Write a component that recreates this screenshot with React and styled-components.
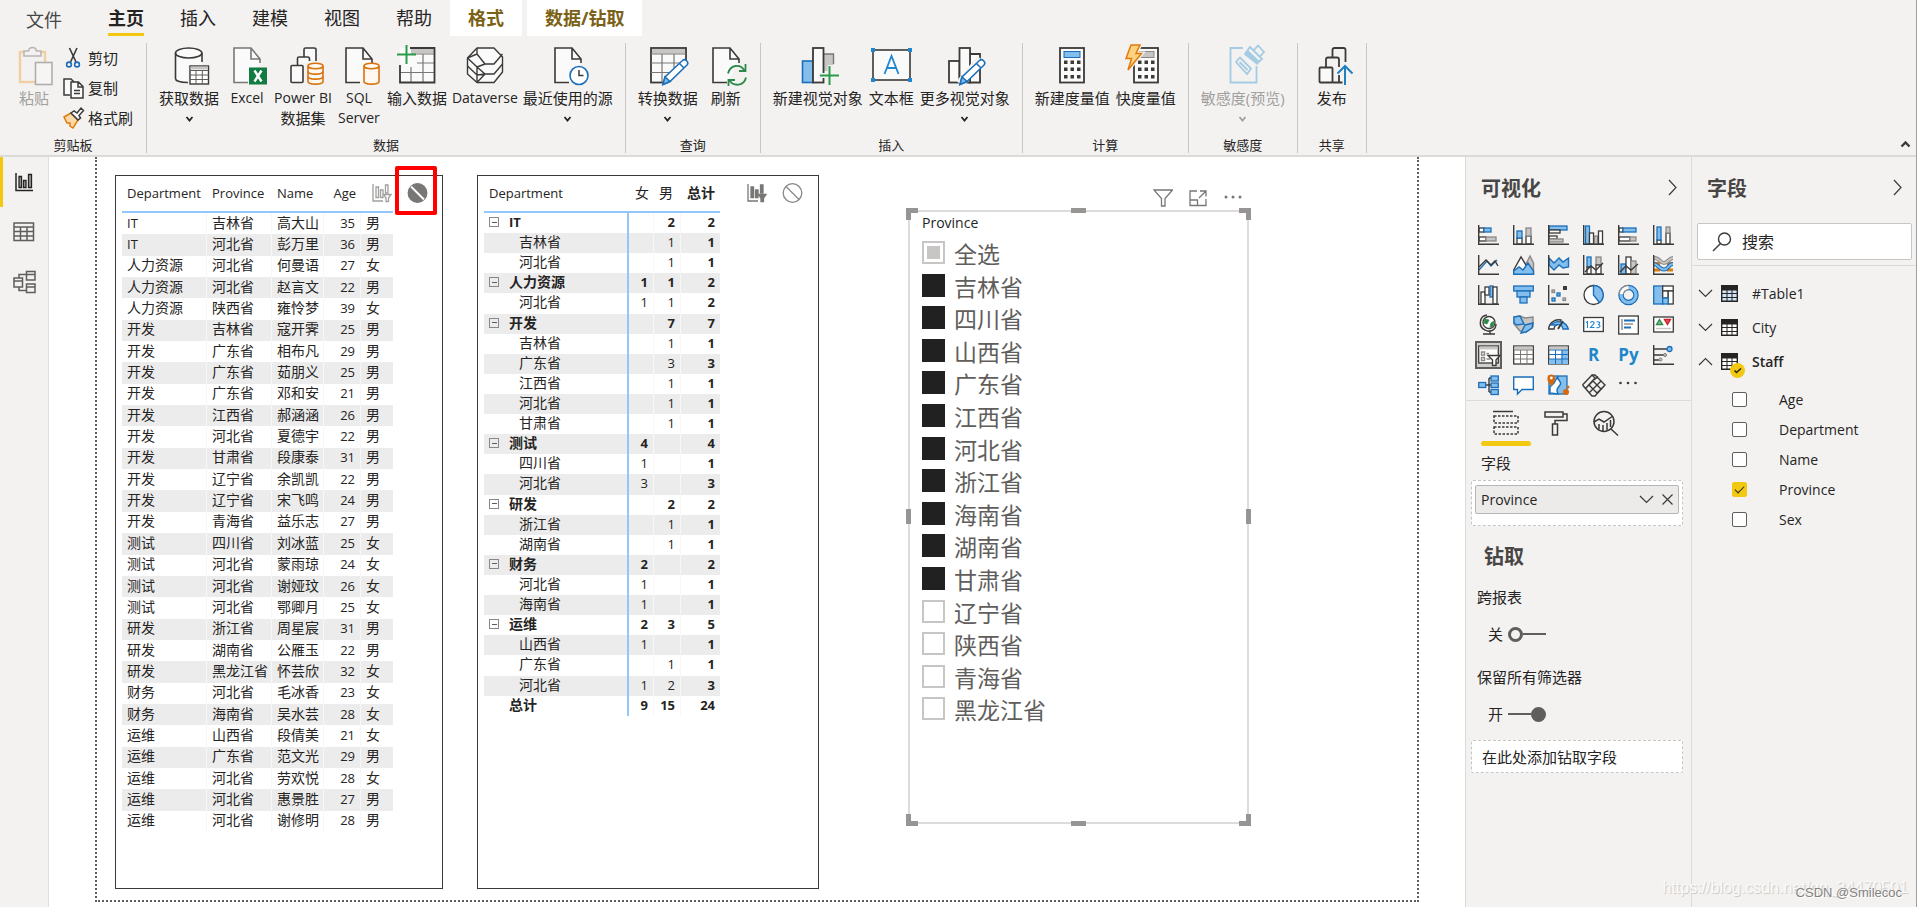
import React from 'react'
import styled, { createGlobalStyle, css } from 'styled-components'

const GlobalStyle = createGlobalStyle`
*{ box-sizing:border-box; }
body{
  margin:0;
  background:#fff;
  color:#252423;
  font-family:"Open Sans","Noto Sans CJK SC",sans-serif;
  font-size:15px;
}
button,input{
  font:inherit;
  color:inherit;
  margin:0;
}
button{
  padding:0;
  border:0;
  background:none;
  cursor:pointer;
}
`

const isLatin = (text) => /^[\x20-\x7e]+$/.test(String(text))

/* ---------- page shell ---------- */

const Shell = styled.div`
position:relative;
display:flex;
flex-direction:column;
min-height:100vh;
border-right:1px solid #a19f9d;
`
const Workspace = styled.div`
flex:1;
display:flex;
align-items:stretch;
`

/* ---------- ribbon ---------- */

const Ribbon = styled.header`
background:#f3f2f1;
border-bottom:2px solid #dcdad9;
`
const TabBar = styled.nav`
display:flex;
align-items:flex-start;
height:36px;
padding-left:8px;
`
const Tab = styled.button`
height:36px;
padding:0 18px;
font-size:18px;
line-height:36px;
margin-right:${(p) => (p.$contextual ? '5px' : '0')};
${(p) => p.$file && css`
  margin-right:10px;
  line-height:40px;
  color:#484644;
`}
${(p) => p.$contextual && css`
  background:#fff;
  color:#7b6115;
  font-weight:700;
`}
${(p) => p.$active && css`
  font-weight:700;
`}
`
const TabText = styled.span`
display:block;
height:36px;
border-bottom:3px solid ${(p) => (p.$active ? '#f2c811' : 'transparent')};
`
const Groups = styled.div`
display:flex;
align-items:stretch;
height:119px;
padding:7px 0 2px;
`
const Group = styled.section`
display:flex;
flex-direction:column;
justify-content:space-between;
padding:0 9px;
border-right:1px solid #c8c6c4;
`
const GroupItems = styled.div`
display:flex;
align-items:flex-start;
`
const GroupName = styled.div`
font-size:13px;
line-height:16px;
text-align:center;
`
const BigButton = styled.button`
display:flex;
flex-direction:column;
align-items:center;
min-width:50px;
padding:2px ${(p) => (p.$latin ? '2px' : '3px')} 0;
color:${(p) => (p.disabled ? '#a19f9d' : '#252423')};
`
const ButtonLine = styled.span`
font-size:${(p) => (p.$latin ? '14px' : '15px')};
line-height:20px;
white-space:nowrap;
`
const BigIcon = styled.svg`
display:block;
width:40px;
height:40px;
margin-bottom:3px;
overflow:visible;
`
const Caret = styled.svg`
display:block;
width:9px;
height:6px;
margin-top:8px;
`
const ClipStack = styled.div`
display:flex;
flex-direction:column;
padding:0 4px;
`
const SmallButton = styled.button`
display:flex;
align-items:center;
gap:4px;
height:30px;
font-size:15px;
line-height:20px;
`
const SmallIcon = styled.svg`
width:21px;
height:24px;
overflow:visible;
`
const CollapseRibbon = styled.button`
align-self:flex-end;
margin:0 5px 5px auto;
line-height:0;
`

const INK = '#3b3a39'
const BLUE = '#1b6fb8'
const SKY = '#83beec'
const ASH = '#c8c6c4'

const Doc = ({ stroke = INK }) => (
  <path d="M33 18V14L24 3H7V37.500H21M24 3V14H33" fill="#fafafa" stroke={stroke} strokeWidth="1.600" />
)
const Cylinder = ({ bands }) => (
  <g fill="#fff8f0" stroke="#d9730d" strokeWidth="1.600">
    <path d="M25 21V36.500C25 40 40 40 40 36.500V21" />
    <ellipse cx="32.500" cy="21" rx="7.500" ry="2.800" />
    {bands && <path fill="none" d="M25 26.500C25 30 40 30 40 26.500M25 31.500C25 35 40 35 40 31.500" />}
  </g>
)
const Pencil = () => (
  <g strokeWidth="1.500" stroke={BLUE}>
    <path d="M15 39.500L17 32L34.500 15.500C37 13 41.500 17 39 20L22 36.500Z" fill="#fff" />
    <path d="M15 39.500L17 32L22 36.500Z" fill={SKY} />
    <path d="M31.500 18.500L36 23" fill="none" />
  </g>
)
const Plus = ({ x, y }) => (
  <path d={`M${x - 9.5} ${y}H${x + 9.5}M${x} ${y - 9.5}V${y + 9.5}`} stroke="#2b9a4b" strokeWidth="2" />
)
const Keypad = ({ blue }) => (
  <g>
    <rect x="8" y="3" width="24" height="34.500" fill="#fafafa" stroke={INK} strokeWidth="1.800" />
    <rect x="12" y="6.500" width="16" height="6" fill={blue ? SKY : ASH} stroke={blue ? BLUE : '#8a8886'} />
    {[15.500, 22.500, 30].map((y) => [12, 18.500, 25].map((x) => (
      <rect key={`${x}-${y}`} x={x} y={y} width="3.500" height="3.500" fill={INK} />
    )))}
  </g>
)

const ribbonIcons = {
  getData: (
    <>
      <path d="M6.500 8V33.500C6.500 36 12 38 19 38V38L19 20H33V8" fill="#fafafa" />
      <path d="M33 17V8M6.500 8V33.500C6.500 36 12 37.500 19 37.500" fill="none" stroke={INK} strokeWidth="1.600" />
      <ellipse cx="19.700" cy="8" rx="13.200" ry="5" fill="#fafafa" stroke={INK} strokeWidth="1.600" />
      <rect x="21" y="21" width="18.500" height="18" fill="#fff" stroke={INK} strokeWidth="1.400" />
      <path d="M21.500 23H39" stroke={ASH} strokeWidth="3" />
      <path d="M21 25.500H39.500M21 30H39.500M21 34.500H39.500M27 25.500V39M33.300 25.500V39" stroke="#605e5c" />
    </>
  ),
  excel: (
    <>
      <Doc stroke="#797775" />
      <rect x="22" y="22.500" width="18" height="17" fill="#107c41" />
      <path d="M27.500 25.500L34.500 36.500M34.500 25.500L27.500 36.500" stroke="#fff" strokeWidth="2.400" />
    </>
  ),
  powerBi: (
    <>
      <g fill="#fafafa" stroke={INK} strokeWidth="1.600">
        <path d="M21 12V4.500Q21 3 22.500 3H31Q33 3 33 4.500V16" />
        <path d="M14.500 20V13.500Q14.500 12 16 12H24.500Q26.500 12 26.500 14V16" />
        <rect x="8" y="20.500" width="12" height="17" rx="1" />
      </g>
      <Cylinder bands />
    </>
  ),
  sql: (
    <>
      <Doc />
      <Cylinder />
    </>
  ),
  enterData: (
    <>
      <rect x="3" y="3" width="34.500" height="34.500" fill="#fafafa" />
      <path d="M14 5.700H37" stroke={ASH} strokeWidth="5" />
      <path d="M14 9H37M20 18H37M3 27.500H37M14 22V37M26 9V37" stroke="#797775" strokeWidth="1.200" />
      <path d="M13 3H37.500V37.500H3V20" fill="none" stroke={INK} strokeWidth="1.800" />
      <Plus x={9.5} y={9.5} />
    </>
  ),
  dataverse: (
    <g fill="#fafafa" stroke={INK} strokeWidth="1.400" strokeLinejoin="round">
      <path d="M12 3H29L37.500 12V27L29 37.500H12L2.500 29V13Z" />
      <path fill="none" d="M12 3V9L20 19H29L37.500 9M2.500 13L12 9M2.500 13L12 22L20 29L12 37.500M2.500 21L12 30M12 22V37.500M12 22L20 19M20 29H29L37.500 19M12 30L20 29" />
    </g>
  ),
  recent: (
    <>
      <Doc />
      <circle cx="31" cy="30.500" r="9" fill="#fff" stroke={BLUE} strokeWidth="1.600" />
      <path d="M31 25V30.500H35.500" fill="none" stroke={INK} strokeWidth="1.500" />
    </>
  ),
  transform: (
    <>
      <rect x="3" y="3" width="35" height="34.500" fill="#fafafa" stroke={INK} strokeWidth="1.800" />
      <rect x="4" y="4" width="33" height="4.500" fill={ASH} />
      <path d="M3 9H38M3 18H38M3 27.500H38M14 9V37M26 9V37" stroke="#797775" strokeWidth="1.200" />
      <path d="M21 39L40 21V40Z" fill="#f3f2f1" stroke="#f3f2f1" strokeWidth="3" />
      <Pencil />
    </>
  ),
  refresh: (
    <>
      <Doc />
      <path d="M22 28.500C24 20 34 18 38.500 25.500M39.500 19V26H33M40 32.500C38 41 28 42 23.500 35.500M22.500 41V35H29" fill="none" stroke="#2b8a47" strokeWidth="1.800" />
    </>
  ),
  newVisual: (
    <>
      <rect x="4.500" y="16" width="10.500" height="21.500" fill={SKY} stroke={BLUE} strokeWidth="1.600" />
      <path d="M25.500 9H35.500V20H30V26H25.500Z" fill={ASH} />
      <path d="M25.500 9H35.500V19" fill="none" stroke="#797775" strokeWidth="1.400" />
      <rect x="15" y="3" width="10.500" height="34.500" fill="#fafafa" stroke={INK} strokeWidth="1.800" />
      <path d="M20 30.500H40M32 21V40" stroke="#f3f2f1" strokeWidth="5" />
      <Plus x={31.5} y={30.5} />
    </>
  ),
  textBox: (
    <>
      <rect x="2" y="5" width="37" height="30" fill="#fafafa" stroke={INK} strokeWidth="1.600" />
      {[[0, 3], [37, 3], [0, 33], [37, 33]].map(([x, y]) => (
        <rect key={`${x}${y}`} x={x} y={y} width="4" height="4" fill="#1f86d0" />
      ))}
      <path d="M13.500 29L20.500 11L27.500 29M16 23H25" fill="none" stroke="#1f86d0" strokeWidth="1.800" />
    </>
  ),
  moreVisuals: (
    <>
      <g fill="#fafafa" stroke={INK} strokeWidth="1.800">
        <rect x="4" y="16" width="10.500" height="21.500" />
        <path d="M24.500 9H35V37.500H24.500Z" />
        <rect x="14.500" y="3" width="10.500" height="34.500" />
      </g>
      <path d="M15 39L36 14" stroke="#f3f2f1" strokeWidth="9" />
      <Pencil />
    </>
  ),
  measure: <Keypad blue />,
  quickMeasure: (
    <>
      <Keypad />
      <path d="M5 0H14L10 8.500H15.500L2 25L5.500 13.500H0Z" fill="#fcd27f" stroke="#f3f2f1" strokeWidth="4" />
      <path d="M5 0H14L10 8.500H15.500L2 25L5.500 13.500H0Z" fill="#fcd27f" stroke="#e07b0e" strokeWidth="1.500" />
    </>
  ),
  sensitivity: (
    <g fill="none" stroke="#a3cbe3" strokeWidth="1.800">
      <path d="M20 3H7.500V37.500H33.500V21" />
      <path d="M13 17L17 12.500L28 23.500L24 29Z M16.500 17L24.500 25" />
      <path d="M22 9L27 2L39 14L34 18.500Z" />
      <path d="M24 7L35.500 18" strokeWidth="4" />
      <path d="M31 5L35 0.500L41 7L37 11.500" />
    </g>
  ),
  publish: (
    <>
      <g fill="#fafafa" stroke={INK} strokeWidth="1.800">
        <path d="M20.500 12V5Q20.500 3 22.500 3H31.500Q33.500 3 33.500 5V17" fill="none" />
        <path d="M14 22V14.500Q14 12.500 16 12.500H25Q27 12.500 27 14.500V22" fill="none" />
        <rect x="7.500" y="22.500" width="13" height="15" rx="1" />
        <path d="M20.500 37.500H30.500M27 30V37.500" fill="none" />
      </g>
      <path d="M33 40V21M25.500 28.500L33 21L40.500 28.500" fill="none" stroke="#1f7fbf" strokeWidth="2" />
    </>
  ),
  paste: (
    <>
      <rect x="6" y="7" width="25" height="30" fill="none" stroke="#f0cfa0" strokeWidth="2.400" />
      <path d="M10 11V6H14.500Q15 2.500 18.500 2.500Q22 2.500 22.500 6H27V11Z" fill="#f3f2f1" stroke="#b8b6b4" strokeWidth="1.600" />
      <rect x="21.500" y="17.500" width="16.500" height="22" fill="#f6f5f4" stroke="#b0aeac" strokeWidth="1.600" />
    </>
  ),
}

const groups = [
  {
    name: '数据',
    items: [
      { icon: 'getData', lines: ['获取数据'], menu: true },
      { icon: 'excel', lines: ['Excel'] },
      { icon: 'powerBi', lines: ['Power BI', '数据集'] },
      { icon: 'sql', lines: ['SQL', 'Server'] },
      { icon: 'enterData', lines: ['输入数据'] },
      { icon: 'dataverse', lines: ['Dataverse'] },
      { icon: 'recent', lines: ['最近使用的源'], menu: true },
    ],
  },
  {
    name: '查询',
    items: [
      { icon: 'transform', lines: ['转换数据'], menu: true },
      { icon: 'refresh', lines: ['刷新'] },
    ],
  },
  {
    name: '插入',
    items: [
      { icon: 'newVisual', lines: ['新建视觉对象'] },
      { icon: 'textBox', lines: ['文本框'] },
      { icon: 'moreVisuals', lines: ['更多视觉对象'], menu: true },
    ],
  },
  {
    name: '计算',
    items: [
      { icon: 'measure', lines: ['新建度量值'] },
      { icon: 'quickMeasure', lines: ['快度量值'] },
    ],
  },
  { name: '敏感度', items: [{ icon: 'sensitivity', lines: ['敏感度(预览)'], menu: true, disabled: true }] },
  { name: '共享', items: [{ icon: 'publish', lines: ['发布'] }] },
]

const RibbonButton = ({ icon, lines, menu, disabled }) => (
  <BigButton disabled={disabled} $latin={isLatin(lines[0])}>
    <BigIcon viewBox="0 0 40 40">{ribbonIcons[icon]}</BigIcon>
    {lines.map((line) => (
      <ButtonLine key={line} $latin={isLatin(line)}>{line}</ButtonLine>
    ))}
    {menu && (
      <Caret viewBox="0 0 9 6">
        <path d="M1.500 1L4.500 4.500L7.500 1" fill="none" stroke="currentColor" strokeWidth="1.800" />
      </Caret>
    )}
  </BigButton>
)

const RibbonArea = () => (
  <Ribbon>
    <TabBar>
      <Tab $file>文件</Tab>
      <Tab $active><TabText $active>主页</TabText></Tab>
      <Tab>插入</Tab>
      <Tab>建模</Tab>
      <Tab>视图</Tab>
      <Tab>帮助</Tab>
      <Tab $contextual>格式</Tab>
      <Tab $contextual>数据/钻取</Tab>
    </TabBar>
    <Groups>
      <Group>
        <GroupItems>
          <BigButton disabled>
            <BigIcon viewBox="0 0 40 40">{ribbonIcons.paste}</BigIcon>
            <ButtonLine>粘贴</ButtonLine>
          </BigButton>
          <ClipStack>
            <SmallButton>
              <SmallIcon viewBox="0 0 21 24">
                <path d="M6.500 2L13 16M14 2L7.500 16" stroke={INK} strokeWidth="1.600" />
                <circle cx="6" cy="18.500" r="2.400" fill="none" stroke={BLUE} strokeWidth="1.600" />
                <circle cx="14" cy="18.500" r="2.400" fill="none" stroke={BLUE} strokeWidth="1.600" />
              </SmallIcon>
              剪切
            </SmallButton>
            <SmallButton>
              <SmallIcon viewBox="0 0 21 24">
                <path d="M7 19H1V3H8L11 6" fill="#fafafa" stroke={INK} strokeWidth="1.500" />
                <path d="M8 6H15.500L20 10.500V22H8ZM15 6V11H20M11 14.500H17M11 17.500H17" fill="#fafafa" stroke={INK} strokeWidth="1.500" />
              </SmallIcon>
              复制
            </SmallButton>
            <SmallButton>
              <SmallIcon viewBox="0 0 21 24">
                <path d="M1 11L8 7L15 14L10 22L7 20V17L4 17Z" fill="#fcd9a8" stroke="#e07b0e" strokeWidth="1.500" />
                <path d="M8 7L11 5L14 7L18 2L20.500 4.500L16 9.500L17.500 12L15 14Z" fill="#fafafa" stroke={INK} strokeWidth="1.500" />
              </SmallIcon>
              格式刷
            </SmallButton>
          </ClipStack>
        </GroupItems>
        <GroupName>剪贴板</GroupName>
      </Group>
      {groups.map((group) => (
        <Group key={group.name}>
          <GroupItems>
            {group.items.map((item) => <RibbonButton key={item.icon} {...item} />)}
          </GroupItems>
          <GroupName>{group.name}</GroupName>
        </Group>
      ))}
      <CollapseRibbon aria-label="折叠功能区">
        <svg width="11" height="8"><path d="M1.500 6.500L5.500 2.500L9.500 6.500" fill="none" stroke={INK} strokeWidth="2.400" /></svg>
      </CollapseRibbon>
    </Groups>
  </Ribbon>
)

/* ---------- view switcher ---------- */

const ViewBar = styled.nav`
flex:0 0 49px;
background:#f3f2f1;
border-right:1px solid #e1dfdd;
`
const ViewButton = styled.button`
display:flex;
align-items:center;
width:48px;
height:50px;
padding-left:10px;
border-left:3px solid ${(p) => (p.$active ? '#f2c811' : 'transparent')};
`

const Views = () => (
  <ViewBar>
    <ViewButton $active aria-label="报表">
      <svg width="22" height="20" fill="none" stroke="#252423" strokeWidth="1.500">
        <path d="M3 1V18.500H20" />
        <path d="M6 4.500H8.500V15.500H6ZM10.500 8.500H13V15.500H10.500ZM15.500 2.500H18.500V15.500H15.500Z" fill="#a19f9d" strokeWidth="1.300" />
      </svg>
    </ViewButton>
    <ViewButton aria-label="数据">
      <svg width="22" height="20" fill="none" stroke="#605e5c" strokeWidth="1.500">
        <path d="M1 1H20.500V18.500H1ZM1 5H20.500M1 9.500H20.500M1 14H20.500M7.500 5V18M14 5V18" />
      </svg>
    </ViewButton>
    <ViewButton aria-label="模型">
      <svg width="23" height="24" fill="none" stroke="#605e5c" strokeWidth="1.500">
        <path d="M1 8H9.500V17H1ZM1 11H9.500M13.500 1.500H22V10H13.500ZM13.500 4.500H22M13.500 14H22V22.500H13.500ZM13.500 17H22M6 8V4.500H13.500M6 17V20.500H13.500" />
      </svg>
    </ViewButton>
  </ViewBar>
)

/* ---------- report canvas ---------- */

const Canvas = styled.main`
flex:1;
display:flex;
min-width:0;
padding:0 46px 5px;
`
const Page = styled.div`
flex:1;
display:flex;
min-width:0;
padding:18px 18px 11px;
border:2px dotted #605e5c;
border-top:0;
`
const Card = styled.section`
position:relative;
flex:0 1 ${(p) => p.$basis};
margin-right:${(p) => p.$after};
padding:8px 6px;
border:1px solid #3b3a39;
`
const Grid = styled.table`
table-layout:fixed;
border-collapse:separate;
border-spacing:0;
width:${(p) => p.$width};
height:${(p) => p.$height};
font-size:14px;
line-height:18px;
white-space:nowrap;
`
const HeadCell = styled.th`
height:29px;
padding:0 5px 9px;
border-bottom:2px solid #93c7fb;
font-size:${(p) => (p.$latin ? '13px' : '14px')};
font-weight:${(p) => (p.$bold ? 700 : 400)};
text-align:${(p) => (p.$right ? 'right' : 'left')};
`
const BodyRow = styled.tr`
&:nth-child(even){ background:#ececec; }
`
const Cell = styled.td`
height:20px;
padding:0 5px 2px;
border-right:1px solid ${(p) => (p.$edge ? '#93c7fb' : '#f7f7f7')};
font-size:${(p) => (p.$latin ? '13px' : '14px')};
font-weight:${(p) => (p.$bold ? 700 : 400)};
text-align:${(p) => (p.$right ? 'right' : 'left')};
${(p) => p.$edge && css`border-right-width:2px;`}
&:last-child{ border-right:0; }
`
const RowLabel = styled.span`
display:flex;
align-items:center;
gap:10px;
padding-left:${(p) => (p.$child ? '30px' : p.$total ? '20px' : '0')};
`
const Expander = styled.button`
display:flex;
align-items:center;
justify-content:center;
width:10px;
height:10px;
border:1px solid #8a8886;
&::after{
  content:'';
  width:5px;
  height:1px;
  background:#605e5c;
}
`
const Interactions = styled.div`
position:absolute;
top:7px;
left:${(p) => p.$left};
display:flex;
gap:15px;
`
const IconButton = styled.button`
line-height:0;
`
const RedFrame = styled.div`
position:absolute;
top:-10px;
left:279px;
width:42px;
height:49px;
border:4px solid #fe0000;
border-radius:2px;
pointer-events:none;
`

const staff = [
  ['IT', '吉林省', '高大山', 35, '男'],
  ['IT', '河北省', '彭万里', 36, '男'],
  ['人力资源', '河北省', '何曼语', 27, '女'],
  ['人力资源', '河北省', '赵言文', 22, '男'],
  ['人力资源', '陕西省', '雍怜梦', 39, '女'],
  ['开发', '吉林省', '寇开霁', 25, '男'],
  ['开发', '广东省', '相布凡', 29, '男'],
  ['开发', '广东省', '茹朋义', 25, '男'],
  ['开发', '广东省', '邓和安', 21, '男'],
  ['开发', '江西省', '郝涵涵', 26, '男'],
  ['开发', '河北省', '夏德宇', 22, '男'],
  ['开发', '甘肃省', '段康泰', 31, '男'],
  ['开发', '辽宁省', '余凯凯', 22, '男'],
  ['开发', '辽宁省', '宋飞鸣', 24, '男'],
  ['开发', '青海省', '益乐志', 27, '男'],
  ['测试', '四川省', '刘冰蓝', 25, '女'],
  ['测试', '河北省', '蒙雨琼', 24, '女'],
  ['测试', '河北省', '谢娅玟', 26, '女'],
  ['测试', '河北省', '鄂卿月', 25, '女'],
  ['研发', '浙江省', '周星宸', 31, '男'],
  ['研发', '湖南省', '公雁玉', 22, '男'],
  ['研发', '黑龙江省', '怀芸欣', 32, '女'],
  ['财务', '河北省', '毛冰香', 23, '女'],
  ['财务', '海南省', '吴水芸', 28, '女'],
  ['运维', '山西省', '段倩美', 21, '女'],
  ['运维', '广东省', '范文光', 29, '男'],
  ['运维', '河北省', '劳欢悦', 28, '女'],
  ['运维', '河北省', '惠景胜', 27, '男'],
  ['运维', '河北省', '谢修明', 28, '男'],
]

// level: 0 department, 1 province, 2 grand total
const matrix = [
  [0, 'IT', '', 2, 2],
  [1, '吉林省', '', 1, 1],
  [1, '河北省', '', 1, 1],
  [0, '人力资源', 1, 1, 2],
  [1, '河北省', 1, 1, 2],
  [0, '开发', '', 7, 7],
  [1, '吉林省', '', 1, 1],
  [1, '广东省', '', 3, 3],
  [1, '江西省', '', 1, 1],
  [1, '河北省', '', 1, 1],
  [1, '甘肃省', '', 1, 1],
  [0, '测试', 4, '', 4],
  [1, '四川省', 1, '', 1],
  [1, '河北省', 3, '', 3],
  [0, '研发', '', 2, 2],
  [1, '浙江省', '', 1, 1],
  [1, '湖南省', '', 1, 1],
  [0, '财务', 2, '', 2],
  [1, '河北省', 1, '', 1],
  [1, '海南省', 1, '', 1],
  [0, '运维', 2, 3, 5],
  [1, '山西省', 1, '', 1],
  [1, '广东省', '', 1, 1],
  [1, '河北省', 1, 2, 3],
  [2, '总计', 9, 15, 24],
]

const FilterChart = ({ solid }) => (
  <svg width="20" height="20" fill={solid ? '#797775' : 'none'} stroke={solid ? '#797775' : '#a19f9d'} strokeWidth="1.300">
    <path d="M1 1V18H11" fill="none" />
    <path d="M4 4H6.500V14.500H4ZM8.500 7H11V14.500H8.500ZM13.500 2H16V10H13.500Z" />
    <path d="M11.500 11.500H19L16.500 15V18.500H14V15Z" fill={solid ? '#797775' : '#fff'} />
  </svg>
)
const NoImpact = ({ solid }) => (
  <svg width="21" height="20" fill="none">
    <circle cx="10.500" cy="10" r="9.300" fill={solid ? '#797775' : '#fff'} stroke={solid ? '#797775' : '#8a8886'} strokeWidth="1.300" />
    <path d="M4 3.500L17 16.500" stroke={solid ? '#fff' : '#8a8886'} strokeWidth={solid ? 2 : 1.3} />
  </svg>
)

const StaffTable = () => (
  <Card $basis="328px" $after="34px">
    <Grid $width="271px" $height="648px">
      <colgroup>
        <col width="85" /><col width="65" /><col width="52" /><col width="37" /><col width="32" />
      </colgroup>
      <thead>
        <tr>
          <HeadCell $latin>Department</HeadCell>
          <HeadCell $latin>Province</HeadCell>
          <HeadCell $latin>Name</HeadCell>
          <HeadCell $latin $right>Age</HeadCell>
          <HeadCell />
        </tr>
      </thead>
      <tbody>
        {staff.map((row) => (
          <BodyRow key={row[2]}>
            {row.map((value, i) => (
              <Cell key={i} $latin={isLatin(value)} $right={i === 3}>{value}</Cell>
            ))}
          </BodyRow>
        ))}
      </tbody>
    </Grid>
    <Interactions $left="256px">
      <IconButton aria-label="筛选器"><FilterChart /></IconButton>
      <IconButton aria-label="无"><NoImpact solid /></IconButton>
    </Interactions>
    <RedFrame />
  </Card>
)

const MatrixTable = () => (
  <Card $basis="342px" $after="89px">
    <Grid $width="236px" $height="532px">
      <colgroup>
        <col width="145" /><col width="25" /><col width="27" /><col width="39" />
      </colgroup>
      <thead>
        <tr>
          <HeadCell $latin>Department</HeadCell>
          <HeadCell $right>女</HeadCell>
          <HeadCell>男</HeadCell>
          <HeadCell $right $bold>总计</HeadCell>
        </tr>
      </thead>
      <tbody>
        {matrix.map(([level, label, ...values], i) => (
          <BodyRow key={i}>
            <Cell $edge $latin={isLatin(label)} $bold={level !== 1}>
              <RowLabel $child={level === 1} $total={level === 2}>
                {level === 0 && <Expander aria-label="折叠" />}
                {label}
              </RowLabel>
            </Cell>
            {values.map((value, j) => (
              <Cell key={j} $right $latin $bold={level !== 1 || j === 2}>{value}</Cell>
            ))}
          </BodyRow>
        ))}
      </tbody>
    </Grid>
    <Interactions $left="269px">
      <IconButton aria-label="筛选器"><FilterChart solid /></IconButton>
      <IconButton aria-label="无"><NoImpact /></IconButton>
    </Interactions>
  </Card>
)

const SlicerColumn = styled.section`
flex:0 1 341px;
display:flex;
flex-direction:column;
padding-bottom:65px;
`
const SlicerTools = styled.div`
display:flex;
justify-content:flex-end;
align-items:center;
gap:16px;
height:35px;
padding:11px 6px 0 0;
`
const SlicerBox = styled.div`
position:relative;
flex:1;
padding:1px 12px;
border:2px solid #dddcdb;
`
const Corner = styled.span`
position:absolute;
width:12px;
height:12px;
border:0 solid #979593;
${(p) => p.$v}:-4px;
${(p) => p.$h}:-4px;
border-${(p) => p.$v}-width:5px;
border-${(p) => p.$h}-width:5px;
`
const EdgeHandle = styled.span`
position:absolute;
background:#979593;
${(p) => (p.$side === 'top' || p.$side === 'bottom'
    ? css`left:calc(50% - 8px); width:15px; height:5px;`
    : css`top:calc(50% - 8px); width:5px; height:15px;`)}
${(p) => p.$side}:-4px;
`
const SlicerTitle = styled.h3`
margin:0;
font-size:14px;
font-weight:400;
line-height:20px;
`
const Options = styled.ul`
display:flex;
flex-direction:column;
height:489px;
margin:3px 0 0;
padding:0;
list-style:none;
`
const Option = styled.li`
flex:1;
min-height:0;
`
const OptionLabel = styled.label`
display:flex;
align-items:flex-start;
gap:9px;
padding-top:5px;
color:#605e5c;
font-size:23px;
line-height:26px;
`
const OptionBox = styled.input`
appearance:none;
flex:none;
width:23px;
height:23px;
border:2px solid #c8c6c4;
background:#fff;
&:checked{
  border-color:#212121;
  background:#212121;
}
${(p) => p.$partial && css`
  padding:3px;
  background:#c8c6c4 content-box;
`}
`

const provinces = [
  ['吉林省', true], ['四川省', true], ['山西省', true], ['广东省', true], ['江西省', true],
  ['河北省', true], ['浙江省', true], ['海南省', true], ['湖南省', true], ['甘肃省', true],
  ['辽宁省', false], ['陕西省', false], ['青海省', false], ['黑龙江省', false],
]

const Slicer = () => (
  <SlicerColumn>
    <SlicerTools>
      <IconButton aria-label="筛选器">
        <svg width="20" height="18" fill="none" stroke="#797775" strokeWidth="1.300"><path d="M1 1H19.500L12 9.500V17H8.500V9.500Z" /></svg>
      </IconButton>
      <IconButton aria-label="焦点模式">
        <svg width="18" height="17" fill="none" stroke="#797775" strokeWidth="1.300"><path d="M8 1H1V15.500H17V9M1 10H8.500V15.500M11 1H17V6.500M17 1L10 8" /></svg>
      </IconButton>
      <IconButton aria-label="更多选项">
        <svg width="20" height="17" fill="#797775"><circle cx="3" cy="7" r="1.500" /><circle cx="10" cy="7" r="1.500" /><circle cx="17" cy="7" r="1.500" /></svg>
      </IconButton>
    </SlicerTools>
    <SlicerBox>
      <SlicerTitle>Province</SlicerTitle>
      <Options>
        <Option><OptionLabel><OptionBox type="checkbox" $partial />全选</OptionLabel></Option>
        {provinces.map(([name, on]) => (
          <Option key={name}>
            <OptionLabel><OptionBox type="checkbox" defaultChecked={on} />{name}</OptionLabel>
          </Option>
        ))}
      </Options>
      <Corner $v="top" $h="left" />
      <Corner $v="top" $h="right" />
      <Corner $v="bottom" $h="left" />
      <Corner $v="bottom" $h="right" />
      <EdgeHandle $side="top" />
      <EdgeHandle $side="right" />
      <EdgeHandle $side="bottom" />
      <EdgeHandle $side="left" />
    </SlicerBox>
  </SlicerColumn>
)

/* ---------- visual gallery icons, 21 x 20 ---------- */

const tones = {
  blue: [SKY, BLUE],
  gray: [ASH, '#8a8886'],
  white: ['#fff', INK],
}
const Bar = ({ b, tone = 'white' }) => (
  <rect x={b[0]} y={b[1]} width={b[2]} height={b[3]} fill={tones[tone][0]} stroke={tones[tone][1]} strokeWidth="1.300" />
)
const Axis = () => <path d="M.700 0V19.300H21" fill="none" stroke={INK} strokeWidth="1.400" />
const Stroke = ({ d, c = INK, f = 'none', w = 1.4 }) => <path d={d} stroke={c} fill={f} strokeWidth={w} />

const gallery = {
  stackedBar: <><Bar b={[1, 3, 5, 4]} /><Bar b={[6, 3, 7, 4]} tone="blue" /><Bar b={[1, 12, 7, 4]} /><Bar b={[8, 12, 10, 4]} tone="gray" /><Axis /></>,
  stackedColumn: <><Bar b={[4, 13, 5, 6]} /><Bar b={[4, 6, 5, 7]} tone="blue" /><Bar b={[13, 11, 5, 8]} /><Bar b={[13, 3, 5, 8]} tone="gray" /><Axis /></>,
  clusteredBar: <><Bar b={[1, 1, 18, 4]} tone="blue" /><Bar b={[1, 5, 11, 3]} /><Bar b={[1, 11, 8, 3]} /><Bar b={[1, 14, 14, 3]} tone="gray" /><Axis /></>,
  clusteredColumn: <><Bar b={[2.500, 1, 4, 18]} tone="blue" /><Bar b={[6.500, 8, 4, 11]} /><Bar b={[11.500, 11, 3, 8]} tone="gray" /><Bar b={[15.500, 6, 4, 13]} /><Axis /></>,
  fullBar: <><Bar b={[1, 3, 4, 4]} /><Bar b={[5, 3, 13, 4]} tone="blue" /><Bar b={[1, 12, 11, 4]} /><Bar b={[12, 12, 6, 4]} tone="gray" /><Axis /></>,
  fullColumn: <><Bar b={[4, 15, 4, 4]} /><Bar b={[4, 2, 4, 13]} tone="blue" /><Bar b={[13, 8, 4, 11]} /><Bar b={[13, 2, 4, 6]} tone="gray" /><Axis /></>,
  line: <><Stroke d="M1 15L9 6L13 11L19 5" c={BLUE} /><Stroke d="M1 12L8 5L13 10L17 6L20 11" c={INK} /><Axis /></>,
  area: <><Stroke d="M8 19L17 1L20.500 8V19Z" c="#8a8886" f={ASH} /><Stroke d="M.700 15L8 2L16 15V19H.700Z" f="#fff" /><Stroke d="M.700 16L6 12L10 15L15 8L20.500 16V19.300H.700Z" c={BLUE} f={SKY} /></>,
  stackedArea: <><Stroke d="M1 3L6 8L11 3L15 7L20.500 3V12L15 13L11 10L6 15L1 10Z" c={BLUE} f={SKY} /><Axis /></>,
  lineStacked: <><Bar b={[4, 2, 4, 10]} tone="blue" /><Bar b={[4, 12, 4, 7]} /><Bar b={[13, 2, 5, 8]} tone="gray" /><Bar b={[13, 10, 5, 9]} /><Stroke d="M2 17L8 11L13 15L20 8" /><Axis /></>,
  lineClustered: <><Bar b={[3, 9, 5, 10]} tone="blue" /><Bar b={[8, 2, 5, 17]} /><Bar b={[13, 6, 5, 13]} tone="gray" /><Stroke d="M2 17L8 11L13 15L20 9" /><Axis /></>,
  ribbon: <><Stroke d="M1 8.500H7M14 8.500H20M1 15H7M14 15H20" c="#e07b0e" w={3} /><Stroke d="M1 3C7 3 7 8 11 8S16 3 20 3" c="#8a8886" w={4} /><Stroke d="M1 3C7 3 7 8 11 8S16 3 20 3" c={ASH} w={2} /><Stroke d="M1 9C5 9 6 14.500 11 14.500S15 9 20 9" c={BLUE} w={4} /><Stroke d="M1 9C5 9 6 14.500 11 14.500S15 9 20 9" c={SKY} w={2} /><Axis /></>,
  waterfall: <><Bar b={[3, 7, 4, 12]} /><Bar b={[7, 2, 4, 8]} /><Bar b={[12, 1, 3, 11]} tone="blue" /><Bar b={[15, 2, 4, 17]} /><Axis /></>,
  funnel: <><Bar b={[.7, 1, 19.6, 5]} tone="blue" /><Bar b={[4, 6, 13, 6]} tone="blue" /><Bar b={[7, 12, 7, 6]} tone="blue" /></>,
  scatter: <><Bar b={[4, 5, 2.5, 2.5]} tone="gray" /><Bar b={[9, 8, 3, 3]} tone="blue" /><Bar b={[4, 13, 3, 3]} tone="blue" /><Bar b={[15, 13, 2.5, 2.5]} tone="gray" /><rect x="15" y="1" width="4" height="4" fill={INK} /><Axis /></>,
  pie: <><circle cx="10.500" cy="10" r="9.500" fill="#fff" stroke={INK} strokeWidth="1.300" /><Stroke d="M10.500 .5A9.500 9.500 0 0 1 16.500 17.500L10.500 10Z" c={BLUE} f={SKY} /></>,
  donut: <><circle cx="10.500" cy="10" r="7.500" fill="none" stroke={BLUE} strokeWidth="5.500" /><circle cx="10.500" cy="10" r="7.500" fill="none" stroke={SKY} strokeWidth="3.200" /><Stroke d="M3 9A7.500 7.500 0 0 1 10.500 2.500" c="#8a8886" w={5.5} /><Stroke d="M3.300 9A7.500 7.500 0 0 1 10.500 2.500" c="#fff" w={3} /></>,
  treemap: <><Bar b={[.7, 1, 9, 18]} tone="blue" /><Bar b={[9.7, 1, 10.5, 5]} /><Bar b={[9.7, 6, 5.5, 7]} /><Bar b={[15.200, 6, 5, 13]} /><Bar b={[9.700, 13, 5.500, 6]} tone="blue" /></>,
  map: <><Stroke d="M9 0C1 1 0 12 7 15C12 18 18 15 18 9M12 15V19M5 19H17" /><circle cx="11" cy="7.500" r="6" fill="#fff" stroke={INK} strokeWidth="1.300" /><Stroke d="M7 4L11 5L9 9L6 8ZM13 8L16 6L15 11L12 12Z" c="#2b8a47" f="#2b8a47" w={.8} /></>,
  filledMap: <><Stroke d="M1 2L7 1L12 3L20 2V12L13 17L7 16L1 9Z" c="#8a8886" f={ASH} /><Stroke d="M1 2L7 1L11 9L4 10L1 8ZM12 10L20 8L19 13L13 17L8 18Z" c={BLUE} f={SKY} /></>,
  gauge: <><Stroke d="M.7 14A10 9.500 0 0 1 13 5L11.500 9A5 5 0 0 0 6 14Z" c={INK} f="#fff" /><Stroke d="M3 10A10 9.500 0 0 1 20.300 14H15A5 5 0 0 0 8 10Z" c={BLUE} f={SKY} /><Stroke d="M10 14L15 6" w={1.800} /></>,
  card: <><Bar b={[.7, 2.500, 19.600, 14]} /><Stroke d="M3 7.500L4.500 6.500V13M7.500 8C8 6 11.500 6 11 8.500L7.500 12.500H11.500M13.500 7C17 6 18 9 15 9.500C18.500 10 17 13.500 13.500 12.500" c="#1f86d0" w={1.1} /></>,
  multiCard: <><Bar b={[.7, 1, 19.6, 18]} /><Stroke d="M4 4V15" c="#8a8886" /><Stroke d="M6 5.500H17M6 12.500H13" c={BLUE} w={2} /><Stroke d="M6 9H15" c="#8a8886" /></>,
  kpi: <><Bar b={[.7, 2, 19.6, 15]} /><Stroke d="M3.500 9.500L6.500 4.500L9.500 9.500Z" c="#2b8a47" f="#7fc493" /><Stroke d="M11.500 4.500H17.500L14.500 9.500Z" c="#c8232c" f="#e0565d" /><Stroke d="M3 13.500H18" c={ASH} /></>,
  slicer: <><Bar b={[.7, 1, 19.6, 17]} /><path d="M1.500 3H19.500" stroke={ASH} strokeWidth="3" /><Stroke d="M3.500 7H6.500V10H3.500ZM3.500 12.500H6.500V15.500H3.500ZM8.500 8.500H11M8.500 14H12" c="#8a8886" /><Stroke d="M10 10.500H22L18 15V20.500H14.500V15Z" f="#fff" /></>,
  table: <><Bar b={[.7, 1, 19.6, 18]} /><path d="M1.500 3H19.500" stroke={ASH} strokeWidth="3" /><Stroke d="M1 5H20M1 9.500H20M1 14H20M7.500 5V19M14 5V19" c="#797775" w={1} /></>,
  matrix: <><Bar b={[.7, 1, 19.6, 18]} /><path d="M1.500 3H19.500" stroke={ASH} strokeWidth="3" /><path d="M13.500 5H20V19H1V14H13.500Z" fill={SKY} /><Stroke d="M1 5H20M1 9.500H20M1 14H20M7.500 5V19M14 5V19" c={BLUE} w={1} /></>,
  r: 'R',
  python: 'Py',
  influencers: <><Stroke d="M1 4H14M1 10H11M1 15H6" /><circle cx="16.500" cy="4" r="2.500" fill={SKY} stroke={BLUE} strokeWidth="1.300" /><circle cx="12" cy="10" r="1.500" fill={ASH} stroke="#797775" /><circle cx="7.500" cy="14.500" r="1.500" fill={ASH} stroke="#797775" /><Axis /></>,
  decomposition: <><Stroke d="M7 10H14M11 3V17M11 3H14M11 17H14" /><Bar b={[.7, 7.5, 7, 5]} tone="blue" /><Bar b={[13, 1, 7.300, 5]} tone="blue" /><Bar b={[13, 8, 7.300, 4.500]} tone="blue" /><Bar b={[13, 14.500, 7.300, 5]} tone="blue" /></>,
  qa: <Stroke d="M.7 2H20.300V14.500H9L4.500 19V14.500H.7Z" c={BLUE} f="#fff" />,
  arcgis: <><Bar b={[1, 1, 18, 18]} tone="blue" /><Stroke d="M10 1C8 6 15 6 12 10S8 14 10 19L2 18V12L6 8Z" f="#fff" c={BLUE} /><path d="M3.500 11C0 7 -1 5 -.5 2.500C0 -1.500 6.500 -1.500 7 2.500C7.500 5 6 8 3.500 11Z" fill="#d9680d" /><circle cx="3.300" cy="3" r="1.400" fill="#fff" /><circle cx="18" cy="17" r="3" fill="#d9680d" /><circle cx="20" cy="12" r="1.500" fill="#d9680d" /></>,
  powerApps: <><Stroke d="M-.5 10L9 0L12 3L3 13M9 0H12L22 10L12 21H9L-.5 10M6 10L10 6L14 10L10 14ZM11 5L15 1.500M14 10L18 6L22 10L18 14ZM10 14L14 10L18 14L14 18ZM3 13L6 10L10 14L6 18" /></>,
  more: <g fill={INK}><circle cx="2.500" cy="8" r="1.300" /><circle cx="10" cy="8" r="1.300" /><circle cx="17.500" cy="8" r="1.300" /></g>,
}

/* ---------- side panels ---------- */

const Panel = styled.aside`
flex:0 0 ${(p) => p.$width};
min-width:0;
background:#f3f2f1;
border-left:1px solid #dddbda;
`
const PanelHead = styled.div`
display:flex;
justify-content:space-between;
align-items:center;
height:64px;
padding:0 14px 0 15px;
`
const Heading = styled.h2`
margin:0;
color:#484644;
font-size:20px;
font-weight:700;
line-height:30px;
`
const Gallery = styled.div`
display:grid;
grid-template-columns:repeat(6,27px);
grid-auto-rows:28px;
gap:2px 8px;
padding:0 0 1px 9px;
border-bottom:1px solid #dddbda;
`
const GalleryButton = styled.button`
display:flex;
justify-content:center;
align-items:center;
color:#1f86c8;
font-size:17px;
font-weight:700;
line-height:20px;
${(p) => p.$active && css`
  background:#d2d0ce;
  border:2px solid #605e5c;
`}
`
const GalleryIcon = styled.svg`
flex:none;
width:21px;
height:20px;
overflow:visible;
`
const PaneTabs = styled.div`
display:flex;
padding-left:15px;
`
const PaneTab = styled.button`
display:flex;
flex-direction:column;
align-items:center;
justify-content:space-between;
width:50px;
height:45px;
padding-top:9px;
&::after{
  content:'';
  width:50px;
  height:5px;
  border-radius:3px;
  background:${(p) => (p.$active ? '#f2c811' : 'transparent')};
}
`
const WellName = styled.div`
padding:5px 15px;
line-height:24px;
`
const Well = styled.div`
margin:0 8px 0 5px;
padding:${(p) => (p.$empty ? '4px 10px 3px' : '4px 3px 11px')};
border:1px dashed #c8c6c4;
border-radius:2px;
background:#fff;
line-height:24px;
`
const Pill = styled.div`
display:flex;
align-items:center;
height:29px;
padding:0 5px;
border:1px solid #b8b6b4;
border-radius:2px;
background:#edebe9;
font-size:14px;
`
const PillText = styled.span`
flex:1;
`
const PillButton = styled.button`
margin-left:8px;
line-height:0;
`
const DrillHead = styled(Heading)`
padding:16px 18px 0;
`
const Setting = styled.div`
padding:15px 11px 8px;
line-height:20px;
`
const DrillWell = styled(Well)`
margin-top:8px;
`
const SwitchRow = styled.label`
display:flex;
align-items:center;
gap:5px;
padding:17px 11px 0;
`
const Switch = styled.input`
appearance:none;
display:flex;
align-items:center;
width:38px;
height:15px;
&::before{
  content:'';
  flex:1;
  order:1;
  height:2px;
  background:#605e5c;
}
&::after{
  content:'';
  box-sizing:border-box;
  width:15px;
  height:15px;
  border:3px solid #605e5c;
  border-radius:50%;
}
&:checked::after{
  order:2;
  background:#605e5c;
}
`

const VisualsPanel = () => (
  <Panel $width="226px">
    <PanelHead>
      <Heading>可视化</Heading>
      <IconButton aria-label="折叠"><svg width="9" height="20"><path d="M1 1L8 8.500L1 16" fill="none" stroke={INK} strokeWidth="1.200" /></svg></IconButton>
    </PanelHead>
    <Gallery>
      {Object.entries(gallery).map(([name, art]) => (
        <GalleryButton key={name} aria-label={name} $active={name === 'slicer'}>
          {typeof art === 'string' ? art : <GalleryIcon viewBox="0 0 21 20">{art}</GalleryIcon>}
        </GalleryButton>
      ))}
    </Gallery>
    <PaneTabs>
      <PaneTab $active aria-label="字段">
        <svg width="26" height="26" fill="none" stroke={INK} strokeWidth="1.500">
          <path d="M0 1.500H20" />
          <path d="M1 6H25V13H1ZM1 17H25V24H1Z" strokeDasharray="2.500 1.500" />
        </svg>
      </PaneTab>
      <PaneTab aria-label="格式">
        <svg width="24" height="26" fill="none" stroke={INK} strokeWidth="1.500">
          <path d="M1 2H19V7H1ZM19 4H23V10.500H11V14M8.500 14H13.500V25H8.500Z" />
        </svg>
      </PaneTab>
      <PaneTab aria-label="分析">
        <svg width="26" height="26" fill="none" stroke={INK} strokeWidth="1.500">
          <circle cx="11" cy="11.500" r="10" />
          <path d="M1 12L6 9L11 12L20 6M18 19L25 25.500M6 14V19M10 15V21M14 13V20M17.500 10V17" />
        </svg>
      </PaneTab>
    </PaneTabs>
    <WellName>字段</WellName>
    <Well>
      <Pill>
        <PillText>Province</PillText>
        <PillButton aria-label="字段选项"><svg width="15" height="9"><path d="M1 1L7.500 7.500L14 1" fill="none" stroke={INK} strokeWidth="1.200" /></svg></PillButton>
        <PillButton aria-label="删除字段"><svg width="11" height="11"><path d="M.5 .5L10.500 10.500M10.500 .5L.5 10.500" stroke={INK} strokeWidth="1.200" /></svg></PillButton>
      </Pill>
    </Well>
    <DrillHead>钻取</DrillHead>
    <Setting>
      跨报表
      <SwitchRow>关<Switch type="checkbox" role="switch" /></SwitchRow>
    </Setting>
    <Setting>
      保留所有筛选器
      <SwitchRow>开<Switch type="checkbox" role="switch" defaultChecked /></SwitchRow>
    </Setting>
    <DrillWell $empty>在此处添加钻取字段</DrillWell>
  </Panel>
)

const SearchArea = styled.div`
padding:2px 4px 5px 5px;
border-bottom:1px solid #dddbda;
`
const SearchBox = styled.label`
display:flex;
align-items:center;
gap:10px;
height:37px;
padding-left:14px;
border:1px solid #c8c6c4;
border-radius:2px;
background:#fff;
`
const SearchInput = styled.input`
flex:1;
width:100%;
min-width:0;
padding:0;
border:0;
outline:0;
background:none;
font-size:16px;
&::placeholder{ color:#252423; }
`
const TableList = styled.div`
padding-top:10px;
font-size:14px;
`
const TableRow = styled.button`
display:grid;
grid-template-columns:23px 31px 1fr;
align-items:center;
width:100%;
height:34px;
padding-left:6px;
font-weight:${(p) => (p.$bold ? 600 : 400)};
text-align:left;
`
const FieldList = styled.div`
padding:6px 0 0 40px;
`
const FieldLabel = styled.label`
display:flex;
align-items:center;
gap:32px;
height:30px;
`
const FieldCheck = styled.input`
appearance:none;
width:15px;
height:15px;
border:1px solid #605e5c;
border-radius:2px;
background:#fff;
&:checked{
  border-color:#f2c811;
  background:#f2c811;
}
&:checked::after{
  content:'';
  display:block;
  width:8px;
  height:4px;
  margin:3px 0 0 2px;
  border:solid #252423;
  border-width:0 0 1px 1px;
  transform:rotate(-45deg);
}
`

const TableGlyph = ({ tinted, badge }) => (
  <svg width="17" height="17" overflow="visible">
    <path d="M.7 .7H16.300V16.300H.7Z" fill={tinted ? '#cfe3f5' : '#fff'} stroke="#252423" strokeWidth="1.400" />
    <path d="M0 3H17" stroke="#252423" strokeWidth="5" />
    <path d="M1 8.500H16M1 12.500H16M6 5V16M11 5V16" stroke="#252423" />
    {badge && (
      <>
        <circle cx="16.500" cy="17.500" r="7.500" fill="#f2c811" />
        <path d="M13.500 17.500L15.500 19.500L20 15.500" fill="none" stroke="#252423" strokeWidth="1.600" />
      </>
    )}
  </svg>
)
const Chevron = ({ up }) => (
  <svg width="15" height="9">
    <path d={up ? 'M1 8L7.500 1.500L14 8' : 'M1 1L7.500 7.500L14 1'} fill="none" stroke={INK} strokeWidth="1.200" />
  </svg>
)

const FieldsPanel = () => (
  <Panel $width="225px">
    <PanelHead>
      <Heading>字段</Heading>
      <IconButton aria-label="折叠"><svg width="9" height="20"><path d="M1 1L8 8.500L1 16" fill="none" stroke={INK} strokeWidth="1.200" /></svg></IconButton>
    </PanelHead>
    <SearchArea>
      <SearchBox>
        <svg width="20" height="20" fill="none" stroke={INK} strokeWidth="1.400"><circle cx="12.500" cy="7" r="6" /><path d="M8.500 11.500L1 19" /></svg>
        <SearchInput type="text" placeholder="搜索" aria-label="搜索" />
      </SearchBox>
    </SearchArea>
    <TableList>
      <TableRow><Chevron /><TableGlyph tinted />#Table1</TableRow>
      <TableRow><Chevron /><TableGlyph />City</TableRow>
      <TableRow $bold><Chevron up /><TableGlyph badge />Staff</TableRow>
      <FieldList>
        {['Age', 'Department', 'Name', 'Province', 'Sex'].map((field) => (
          <FieldLabel key={field}>
            <FieldCheck type="checkbox" defaultChecked={field === 'Province'} />
            {field}
          </FieldLabel>
        ))}
      </FieldList>
    </TableList>
  </Panel>
)

/* ---------- watermarks ---------- */

const BlogMark = styled.span`
position:absolute;
right:8px;
bottom:9px;
color:#fafafa;
font:16px/20px "Liberation Sans",sans-serif;
text-shadow:1px 1px 1px #c8c6c4;
`
const AuthorMark = styled.span`
position:absolute;
right:14px;
bottom:5px;
color:#858381;
font:13px/18px "Liberation Sans",sans-serif;
text-shadow:1px 1px 0 #fff;
`

const App = () => {
  return (
    <>
      <GlobalStyle />
      <Shell>
        <RibbonArea />
        <Workspace>
          <Views />
          <Canvas>
            <Page>
              <StaffTable />
              <MatrixTable />
              <Slicer />
            </Page>
          </Canvas>
          <VisualsPanel />
          <FieldsPanel />
        </Workspace>
        <BlogMark>https://blog.csdn.net/qq_34470501</BlogMark>
        <AuthorMark>CSDN @Smilecoc</AuthorMark>
      </Shell>
    </>
  )
}

export default App
